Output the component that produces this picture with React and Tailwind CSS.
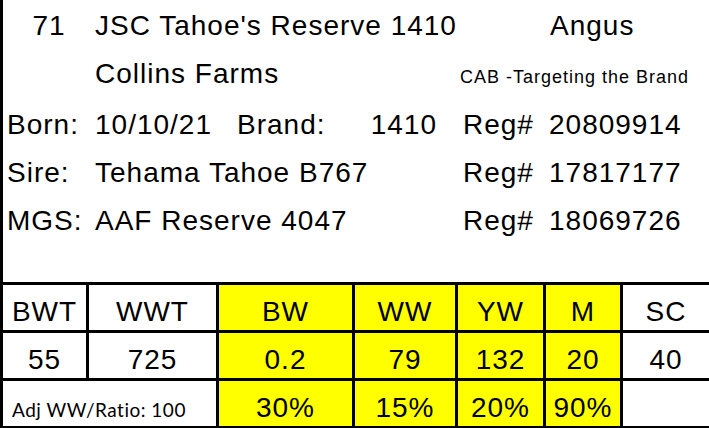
const Cell = ({ children, yellow, className = '' }) => (
  <div
    className={`flex items-end justify-center pb-[3px] text-[28px] leading-[30px] tracking-[1px] ${
      yellow ? 'bg-[#ffff00]' : 'bg-white'
    } ${className}`}
  >
    {children}
  </div>
)

const headers = [
  { label: 'BWT' },
  { label: 'WWT' },
  { label: 'BW', yellow: true },
  { label: 'WW', yellow: true },
  { label: 'YW', yellow: true },
  { label: 'M', yellow: true },
  { label: 'SC' },
]

const values = [
  { v: '55' },
  { v: '725' },
  { v: '0.2', yellow: true },
  { v: '79', yellow: true },
  { v: '132', yellow: true },
  { v: '20', yellow: true },
  { v: '40' },
]

const pcts = ['30%', '15%', '20%', '90%']

export default function App() {
  return (
    <div
      className="h-[428px] w-[709px] overflow-hidden bg-white text-black"
      style={{ fontFamily: '"Liberation Sans", Arial, sans-serif' }}
    >
      {/* info block */}
      <div className="h-[282px] border-l-[3px] border-black pt-[2px] text-[28px] leading-[48px] tracking-[1px]">
        <div className="flex items-baseline">
          <div className="w-[92px] text-center">71</div>
          <div className="w-[455px]">JSC Tahoe's Reserve 1410</div>
          <div>Angus</div>
        </div>
        <div className="flex items-baseline">
          <div className="w-[92px]" />
          <div className="w-[365px]">Collins Farms</div>
          <div className="text-[18px]">CAB -Targeting the Brand</div>
        </div>
        <div className="flex items-baseline">
          <div className="w-[92px] pl-[4px]">Born:</div>
          <div className="w-[142px]">10/10/21</div>
          <div className="flex w-[200px] justify-between">
            <span>Brand:</span>
            <span>1410</span>
          </div>
          <div className="ml-[26px] w-[86px]">Reg#</div>
          <div>20809914</div>
        </div>
        <div className="flex items-baseline">
          <div className="w-[92px] pl-[4px]">Sire:</div>
          <div className="w-[368px]">Tehama Tahoe B767</div>
          <div className="w-[86px]">Reg#</div>
          <div>17817177</div>
        </div>
        <div className="flex items-baseline">
          <div className="w-[92px] pl-[4px]">MGS:</div>
          <div className="w-[368px]">AAF Reserve 4047</div>
          <div className="w-[86px]">Reg#</div>
          <div>18069726</div>
        </div>
      </div>

      {/* EPD table */}
      <div className="grid grid-cols-[83px_127px_133px_100px_85px_74px_86px] grid-rows-[45px_45px_45px] gap-[3px] border-y-[3px] border-l-[3px] border-black bg-black">
        {headers.map((h) => (
          <Cell key={h.label} yellow={h.yellow}>
            {h.label}
          </Cell>
        ))}
        {values.map((c, i) => (
          <Cell key={i} yellow={c.yellow}>
            {c.v}
          </Cell>
        ))}
        <div
          className="col-span-2 flex items-end bg-white pb-[5px] pl-[9px] text-[19px] leading-[22px] tracking-[0.5px]"
          style={{ fontFamily: 'Lato, "Open Sans", sans-serif' }}
        >
          Adj WW/Ratio: 100
        </div>
        {pcts.map((p) => (
          <Cell key={p} yellow>
            {p}
          </Cell>
        ))}
        <div className="bg-white" />
      </div>
    </div>
  )
}
